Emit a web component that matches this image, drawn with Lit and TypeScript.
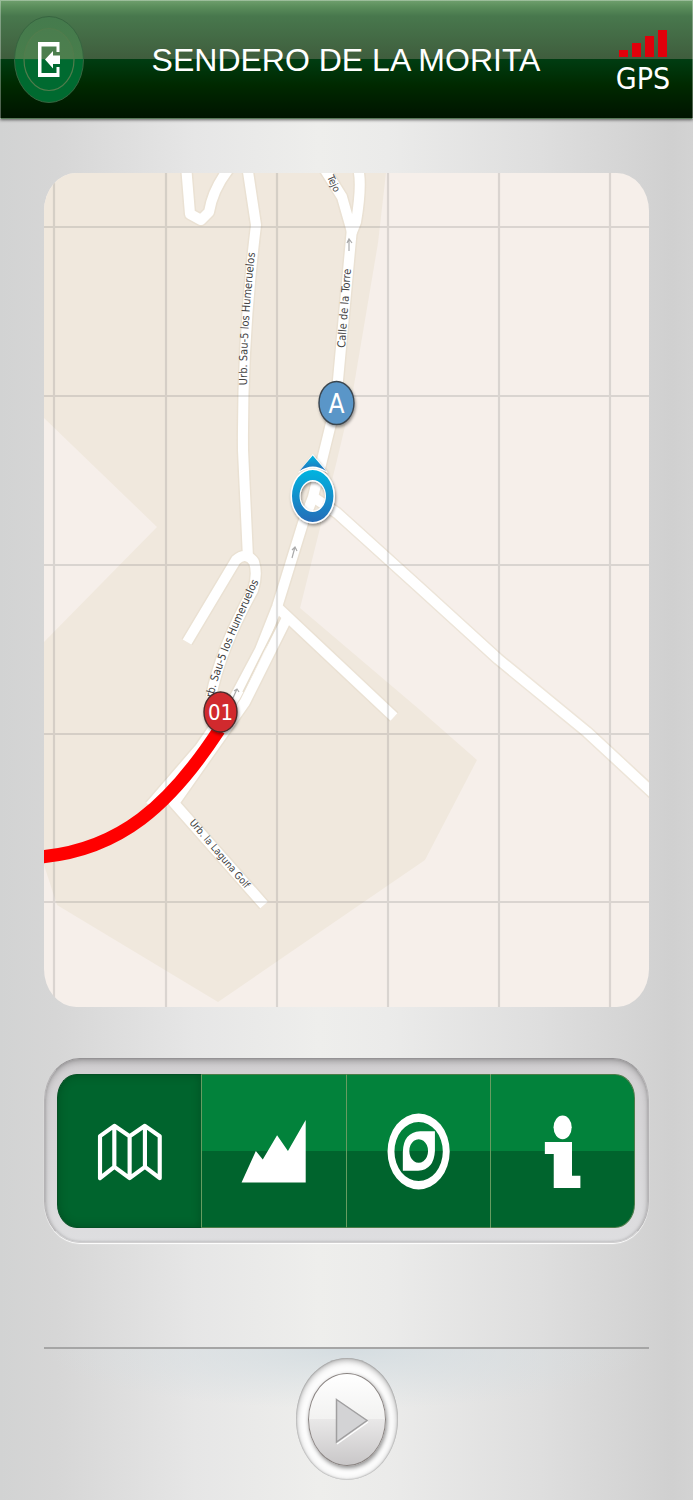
import { LitElement, html, css, svg } from "lit";
import { customElement, state } from "lit/decorators.js";

const columns = [54, 166, 277, 388, 499, 610];
const rows = [227, 396, 565, 734, 902];

const roads = [
  "M186 165L190 214L201 220L209 212Q213 188 231 166",
  "M247 165L256 225Q242 340 243 450L248 558",
  "M187 642L236 560Q246 551 254 562Q258 574 253 590Q220 650 211 697",
  "M322 165L342 197L352 232L356 222Q363 180 357 165",
  "M352 228L338 380L336 403L313 497L303 523L277 607L260 650L235 697L200 748L150 806",
  "M313 497L337 513L420 588L498 659L587 732L655 795",
  "M277 607L394 717",
  "M286 620L245 702L174 803L264 905",
];

const labels = [
  { text: "Urb. Sau-5 los Humeruelos", path: "M247 385Q246 330 257 235", small: false },
  { text: "Calle de la Torre", path: "M345 348L353 240", small: false },
  { text: "rb. Sau-5 los Humeruelos", path: "M213 698Q223 655 266 566", small: false },
  { text: "Urb. la Laguna Golf", path: "M189 823L260 906", small: true },
  { text: "Tejo", path: "M327 177L342 210", small: true },
];

const icons = {
  map: svg`<path d="M99.500 1136L114 1125.500L129.500 1136L145 1125.500L160 1136V1178.500L145 1167L129.500 1178.500L114 1167L99.500 1178.500ZM114 1125.500V1167M129.500 1136V1178.500M145 1125.500V1167" fill="none" stroke="#fff" stroke-width="4.200" stroke-linejoin="round"/>`,
  profile: svg`<path d="M242 1183L256.500 1151L263.500 1159.500L278 1135L289 1151L307 1119.500V1183Z" fill="#fff"/>`,
  compass: svg`<path fill="#fff" fill-rule="evenodd" d="M387 1151.500A31.500 38.500 0 1 1 450 1151.500A31.500 38.500 0 1 1 387 1151.500ZM394 1151.500A24.500 30 0 1 0 443 1151.500A24.500 30 0 1 0 394 1151.500Z"/><path fill="#fff" fill-rule="evenodd" d="M402.500 1171V1152Q403 1132 420 1131H435V1151Q434 1170 418 1171ZM418.500 1139A9.500 12 0 1 0 418.600 1139Z"/>`,
  info: svg`<ellipse cx="562.500" cy="1127" rx="9.200" ry="12" fill="#fff"/><path fill="#fff" d="M544.500 1142H572V1176H580.500V1188.500H553.500V1154H544.500Z"/>`,
};

const tabs = [
  { id: "map", label: "Mapa", box: "57 1074 145 154", icon: icons.map },
  { id: "profile", label: "Perfil", box: "202 1074 145 154", icon: icons.profile },
  { id: "compass", label: "Brújula", box: "346 1074 145 154", icon: icons.compass },
  { id: "info", label: "Información", box: "490 1074 145 154", icon: icons.info },
];

@customElement("app-root")
export class AppRoot extends LitElement {
  @state() private active = "map";

  static styles = css`
    :host {
      display: block;
      min-height: 100vh;
      font-family: "Liberation Sans", Arial, sans-serif;
      background: linear-gradient(90deg, #d2d3d3 0%, #d6d6d6 8%, #e6e6e6 28%, #eeeeec 46%, #ebebea 56%, #dedede 78%, #d0d0d0 97%, #d3d3d3 100%);
    }
    * { box-sizing: border-box; }
    button { padding: 0; margin: 0; border: 0; background: none; cursor: pointer; }
    svg { display: block; }
    .header {
      display: grid;
      grid-template-columns: 70px 1fr 50px;
      align-items: center;
      height: 119px;
      padding: 0 24px 0 13px;
      border: 1px solid #ffffff50;
      border-bottom: 1px solid #5a7a5a;
      background: linear-gradient(180deg, #70a06e 0, #5a8d5b 7px, #48784d 16px, #3f5d3d 59px, #003d12 59px, #002900 85px, #001400 118px) border-box;
      box-shadow: 0 1px 3px #00000090;
    }
    .exit { height: 88px; width: 70px; }
    .title {
      margin: 0;
      padding-right: 10px;
      color: #fff;
      font-size: 32px;
      line-height: 36px;
      font-weight: 400;
      text-align: center;
      white-space: nowrap;
    }
    .gps {
      display: flex;
      flex-direction: column;
      align-items: center;
      padding-top: 12px;
      color: #fff;
      font-family: "DejaVu Sans Condensed", "Open Sans", sans-serif;
      font-size: 30px;
      line-height: 44px;
    }
    .content { padding: 54px 44px 20px; }
    .map {
      overflow: hidden;
      border-radius: 32px / 38px;
      background: #f6efea;
    }
    .map svg { width: 100%; height: auto; }
    .road-name { font: 11px "DejaVu Sans Condensed", sans-serif; fill: #444; }
    .road-name.small { font-size: 10px; }
    .pin { font: 22px "DejaVu Sans Condensed", sans-serif; fill: #fff; text-anchor: middle; }
    .pin.start { font-size: 26px; }
    .tabs {
      display: flex;
      margin-top: 51px;
      padding: 15px 13px 14px 12px;
      border: 1px solid #b5b3b5;
      border-top-color: #949294;
      border-bottom-color: #d0cfd0;
      border-radius: 36px / 42px;
      background: linear-gradient(180deg, #d1cfd1, #dedee0);
      box-shadow: inset 0 3px 6px #00000038, inset 0 0 3px #00000030, 0 1px 1px #fff;
    }
    .tab {
      flex: 1;
      min-width: 0;
      height: 154px;
      border: 1px solid #4c7c49;
      border-left-color: #679c61;
      border-right-width: 0;
      background: linear-gradient(180deg, #02823b 0 50%, #00642d 50%);
    }
    .tab svg { width: 100%; height: 100%; }
    .tab:first-child { border-radius: 20px 0 0 20px / 24px 0 0 24px; }
    .tab:last-child { border-radius: 0 20px 20px 0 / 0 24px 24px 0; border-right-width: 1px; }
    .tab.active {
      border-color: #064f25;
      background: #00642d;
      box-shadow: inset 0 0 8px #002c1060;
    }
    .player {
      display: flex;
      justify-content: center;
      margin-top: 104px;
      padding-top: 9px;
      border-top: 2px solid #a5a5a5;
      background: radial-gradient(ellipse 50% 60px at 50% 0, #d5dde1, #d5dde100);
    }
    .play {
      width: 102px;
      height: 122px;
      padding: 15px 12px;
      border-radius: 50%;
      background: #fcfcfc;
      box-shadow: inset 0 2px 6px #00000058, inset 0 0 2px #00000060;
    }
    .knob {
      display: block;
      height: 93px;
      border: 1px solid #8b8583;
      border-radius: 50%;
      background: linear-gradient(180deg, #fff, #f2f2f1 50%, #e9e8e8 50%, #c9c7c8);
      box-shadow: 1px 2px 4px #00000070;
    }
  `;

  render() {
    return html`
      <header class="header">
        <button class="exit" aria-label="Salir">
          <svg width="70" height="88" viewBox="14 15 70 88">
            <defs>
              <linearGradient id="split" x2="0" y2="1">
                <stop offset="0" stop-color="#457b4d" /><stop offset=".5" stop-color="#487d4b" />
                <stop offset=".5" stop-color="#006a30" /><stop offset="1" stop-color="#006a30" />
              </linearGradient>
            </defs>
            <ellipse cx="49" cy="58.500" rx="34.500" ry="43" fill="url(#split)" stroke="#376540" />
            <ellipse cx="49" cy="58.500" rx="25" ry="31" fill="url(#split)" stroke="#507c4c" stroke-width="1.200" />
            <path d="M24 58.500A25 31 0 0 1 74 58.500Z" fill="#5a845240" />
            <path d="M59.500 51V41H38V76H59.500V66H56.500V72H41.500V45.500H56.500V51Z" fill="#fff" />
            <path d="M45 58.500L53 50V54.500H60V63H53V67.500Z" fill="#fff" />
          </svg>
        </button>
        <h1 class="title">SENDERO DE LA MORITA</h1>
        <div class="gps">
          <svg width="50" height="27" viewBox="0 0 50 27" fill="#e2000b" aria-hidden="true">
            <path d="M1 20h9v7H1zM14 13h9v14h-9zM27 6h9v21h-9zM40 0h9v27h-9z" />
          </svg>
          <span>GPS</span>
        </div>
      </header>
      <main class="content">
        <section class="map" aria-label="Mapa">
          <svg viewBox="44 173 605 834">
            <defs>
              <linearGradient id="blue" x2="0" y2="1"><stop stop-color="#00b4e0" /><stop offset="1" stop-color="#256db8" /></linearGradient>
              <filter id="drop" x="-30%" y="-30%" width="160%" height="170%"><feDropShadow dx="1" dy="2" stdDeviation="1.500" flood-opacity=".4" /></filter>
              ${labels.map((l, i) => svg`<path id="label-${i}" d=${l.path} />`)}
            </defs>
            <path fill="#f0e8dd" d="M44 173H386L378 243L352 397L337 460L300 608L420 710L477 760L425 860L218 1002L57 905L44 865V642L157 527L44 418Z" />
            <g fill="none" stroke="#e7ddcd" stroke-width="13" stroke-linejoin="round" opacity=".6">${roads.map((d) => svg`<path d=${d} />`)}</g>
            <g fill="none" stroke="#fff" stroke-width="10" stroke-linejoin="round">${roads.map((d) => svg`<path d=${d} />`)}</g>
            <path d="M278 622L243 692" stroke="#e7ddcd" stroke-width="1.500" />
            <g stroke="#777" stroke-width="2.200" opacity=".22">
              ${columns.map((x) => svg`<path d="M${x} 173V1007" />`)}
              ${rows.map((y) => svg`<path d="M44 ${y}H649" />`)}
            </g>
            <g fill="none" stroke="#aaa" stroke-width="1.200">
              <path d="M349 251V239M347 243L349 239L352 243M292 558L295 547M292 550L295 547L297 551M233 698L237 689M234 691L237 689L239 692" />
            </g>
            ${labels.map((l, i) => svg`<text class="road-name ${l.small ? "small" : ""}"><textPath href="#label-${i}">${l.text}</textPath></text>`)}
            <path d="M40 857C120 850 170 805 219 730" fill="none" stroke="#f00" stroke-width="13" />
            <g filter="url(#drop)">
              <ellipse cx="336.500" cy="403" rx="17.500" ry="21.500" fill="#5a96c8" stroke="#3b4650" stroke-width="1.400" />
              <ellipse cx="220.500" cy="712" rx="16.500" ry="20" fill="#d12a2e" stroke="#4c2a2a" stroke-width="1.400" />
            </g>
            <text class="pin start" x="336.500" y="413">A</text>
            <text class="pin" x="220.500" y="720">01</text>
            <g filter="url(#drop)" fill="#fff" fill-rule="evenodd">
              <path d="M290.500 496A22.200 27.500 0 1 1 335 496A22.200 27.500 0 1 1 290.500 496ZM300.500 496A12.200 14.500 0 1 0 325 496A12.200 14.500 0 1 0 300.500 496Z" />
              <path d="M312.700 454L328 473Q313 464 298 473Z" />
            </g>
            <path fill="url(#blue)" fill-rule="evenodd" d="M292 496A20.700 26 0 1 1 333.400 496A20.700 26 0 1 1 292 496ZM299.500 496A13.200 16 0 1 0 326 496A13.200 16 0 1 0 299.500 496Z" />
            <path d="M312.700 455.500L326 471Q313 462 299.500 471Z" fill="url(#blue)" />
          </svg>
        </section>
        <nav class="tabs" aria-label="Secciones">
          ${tabs.map((t) => html`
            <button class="tab ${t.id === this.active ? "active" : ""}" aria-label=${t.label} @click=${() => (this.active = t.id)}>
              <svg viewBox=${t.box}>${t.icon}</svg>
            </button>`)}
        </nav>
        <section class="player">
          <button class="play" aria-label="Reproducir">
            <span class="knob">
              <svg width="76" height="91" viewBox="309 1374 76 91">
                <path d="M336.500 1399.500L367 1420.500L336.500 1442Z" fill="#d3d3d5" stroke="#a09fa0" stroke-width="1.500" />
                <path d="M337 1444L368 1422" stroke="#fff" stroke-width="1.200" />
              </svg>
            </span>
          </button>
        </section>
      </main>
    `;
  }
}
